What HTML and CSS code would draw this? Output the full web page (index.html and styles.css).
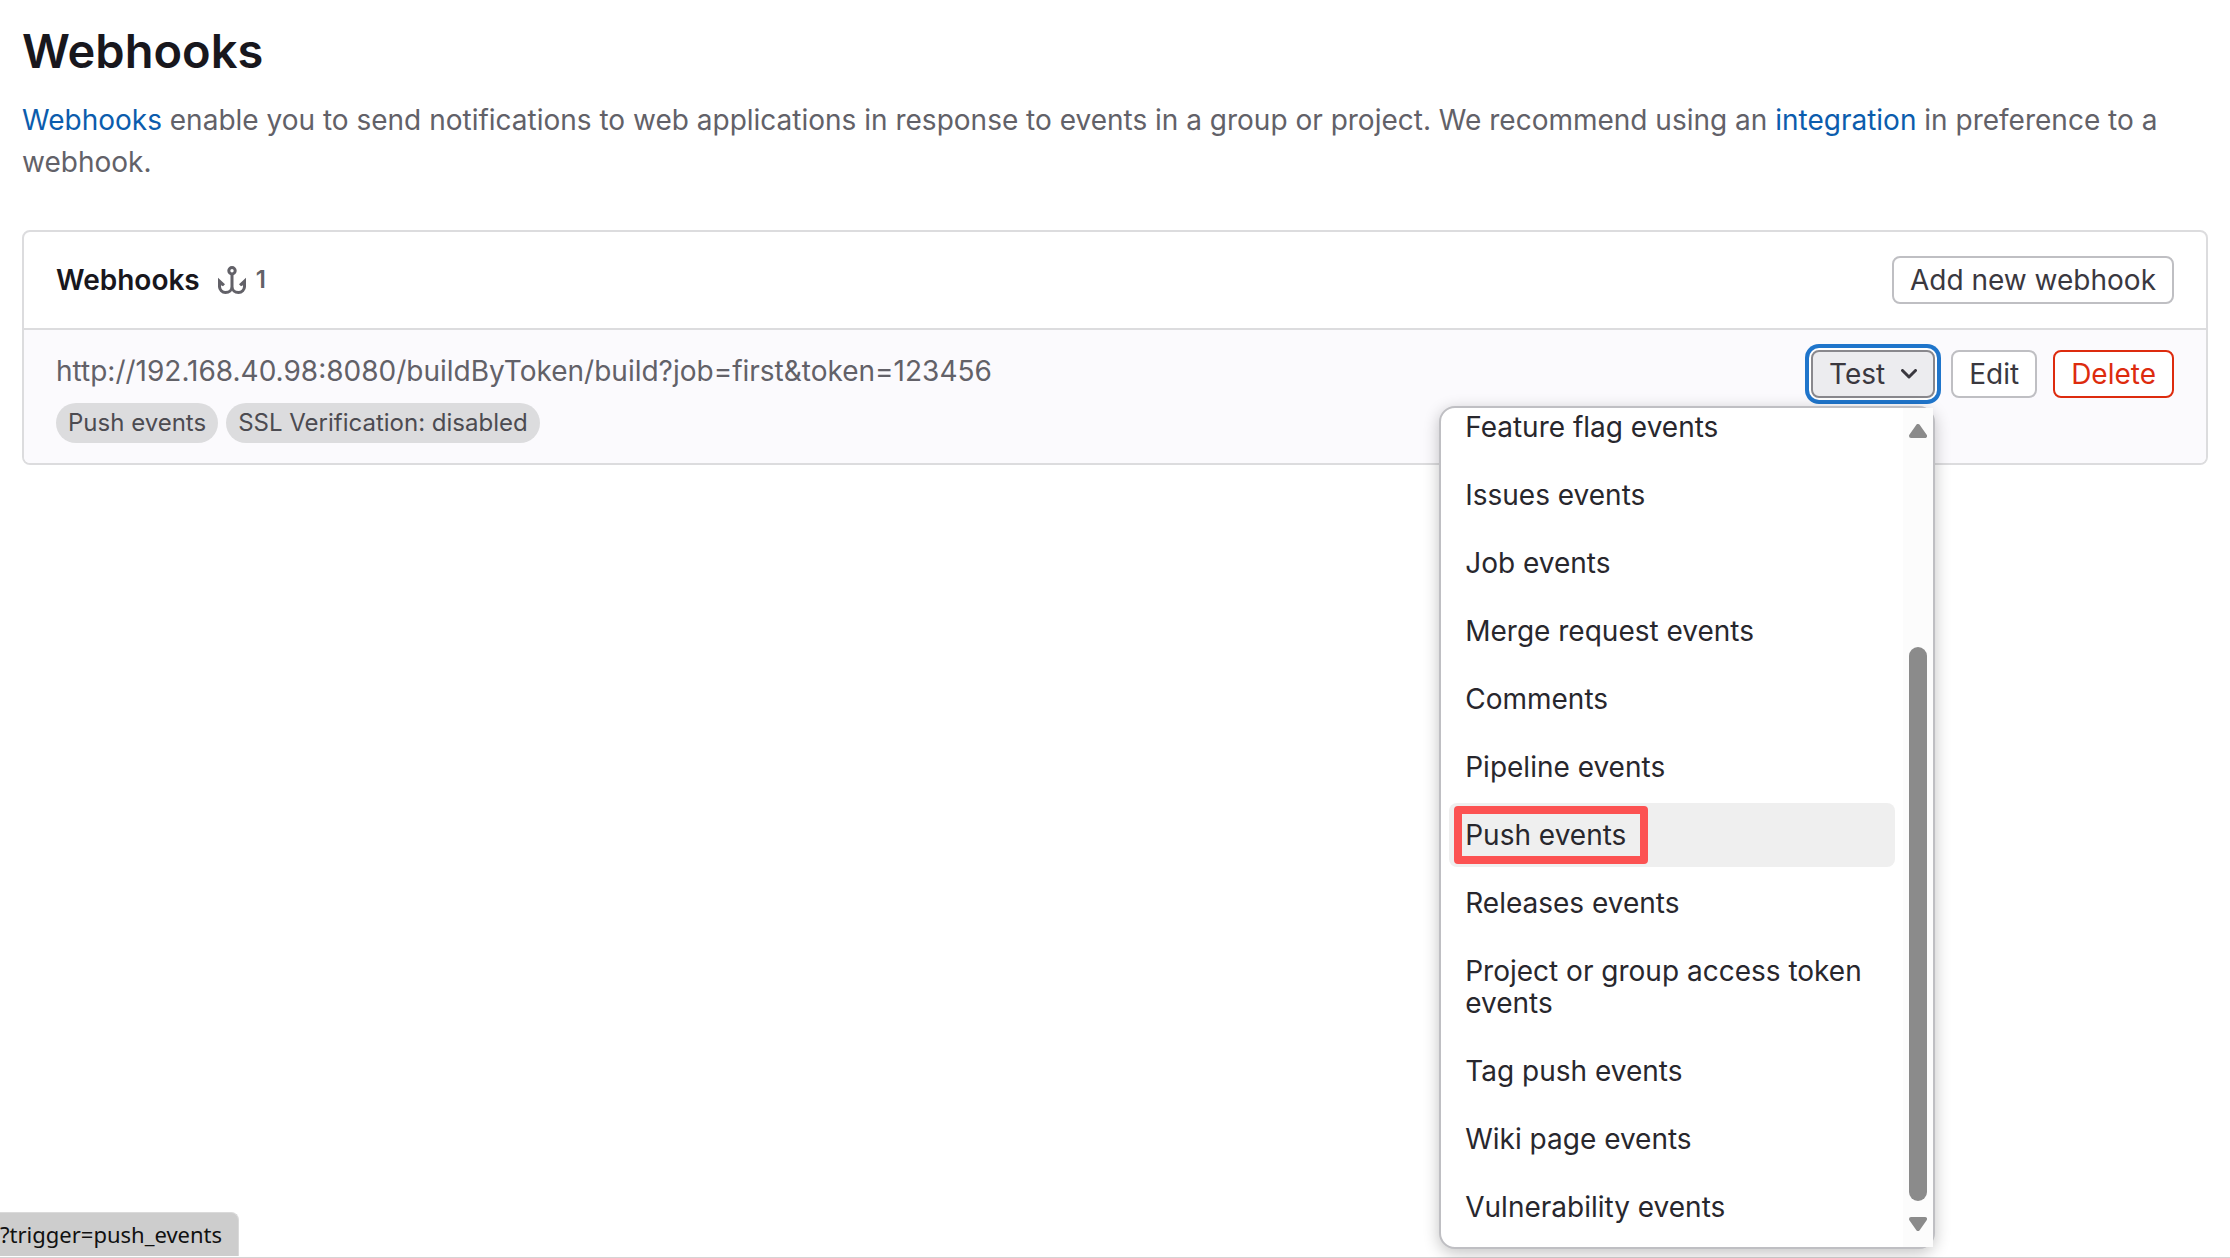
FILE: index.html
```html
<!DOCTYPE html>
<html lang="en">
<head>
<meta charset="utf-8">
<title>Webhooks</title>
<link rel="stylesheet" href="styles.css">
</head>
<body>
<main class="page">
  <h1 class="page-title">Webhooks</h1>
  <p class="intro"><a href="#">Webhooks</a> enable you to send notifications to web applications in response to events in a group or project. We recommend using an <a href="#">integration</a> in preference to a webhook.</p>

  <section class="card">
    <header class="card-header">
      <div class="card-heading">
        <h2 class="card-title">Webhooks</h2>
        <span class="count">
          <svg class="hook-icon" viewBox="0 0 28 28" aria-hidden="true">
            <g fill="none" stroke="currentColor" stroke-width="3">
              <circle cx="14" cy="4.700" r="3.200"/>
              <path d="M14 8V23M1.500 15v5.500a6 6 0 0 0 6 6c3.600 0 6.500-2.500 6.500-6M26.500 15v5.500a6 6 0 0 1-6 6c-3.600 0-6.500-2.500-6.500-6"/>
            </g>
            <path fill="currentColor" d="M0 11.700l7 6.500-2 2-2-1v2H0zM28 11.700l-7 6.500 2 2 2-1v2h3z"/>
          </svg>
          1
        </span>
      </div>
      <button type="button" class="btn">Add new webhook</button>
    </header>
    <div class="card-row">
      <div class="hook">
        <div class="hook-url">http://192.168.40.98:8080/buildByToken/build?job=first&amp;token=123456</div>
        <div class="badges">
          <span class="badge">Push events</span>
          <span class="badge">SSL Verification: disabled</span>
        </div>
      </div>
      <div class="actions">
        <div class="dropdown">
          <button type="button" class="btn btn-open" aria-expanded="true">Test
            <svg class="chevron" viewBox="0 0 16 10" aria-hidden="true"><path d="M1.500 1.500L8 8l6.500-6.500" fill="none" stroke="currentColor" stroke-width="3" stroke-linecap="round" stroke-linejoin="round"/></svg>
          </button>
          <div class="menu">
            <ul class="menu-list">
              <li><a class="menu-item" href="#">Feature flag events</a></li>
              <li><a class="menu-item" href="#">Issues events</a></li>
              <li><a class="menu-item" href="#">Job events</a></li>
              <li><a class="menu-item" href="#">Merge request events</a></li>
              <li><a class="menu-item" href="#">Comments</a></li>
              <li><a class="menu-item" href="#">Pipeline events</a></li>
              <li><a class="menu-item active" href="#">Push events<span class="marker"></span></a></li>
              <li><a class="menu-item" href="#">Releases events</a></li>
              <li><a class="menu-item" href="#">Project or group access token events</a></li>
              <li><a class="menu-item" href="#">Tag push events</a></li>
              <li><a class="menu-item" href="#">Wiki page events</a></li>
              <li><a class="menu-item" href="#">Vulnerability events</a></li>
            </ul>
            <div class="scrollbar" aria-hidden="true">
              <svg class="arrow" viewBox="0 0 18 14"><path d="M9 2l7 10H2z" fill="currentColor" stroke="currentColor" stroke-width="4" stroke-linejoin="round"/></svg>
              <div class="track"><div class="thumb"></div></div>
              <svg class="arrow" viewBox="0 0 18 14"><path d="M9 12l7-10H2z" fill="currentColor" stroke="currentColor" stroke-width="4" stroke-linejoin="round"/></svg>
            </div>
          </div>
        </div>
        <button type="button" class="btn">Edit</button>
        <button type="button" class="btn btn-danger">Delete</button>
      </div>
    </div>
  </section>
</main>
<footer class="status"><span class="status-text">?trigger=push_events</span></footer>
</body>
</html>
```
FILE: styles.css
```css
* { box-sizing: border-box; }

body {
  margin: 0;
  min-height: 100vh;
  display: flex;
  flex-direction: column;
  justify-content: space-between;
  background: #fff;
  color: #626168;
  font: 28px/42px Inter, "Liberation Sans", sans-serif;
}

a { color: #0b5cad; text-decoration: none; }

.page { padding: 20px 22px 0; }

.page-title {
  margin: 0 0 17px;
  color: #18171d;
  font-size: 47px;
  line-height: 62px;
  font-weight: 600;
}

.intro { margin: 0 0 47px; }

.card {
  border: 2px solid #dcdcde;
  border-radius: 8px;
}

.card-header {
  display: flex;
  justify-content: space-between;
  align-items: center;
  padding: 24px 32px;
  border-bottom: 2px solid #dcdcde;
}

.card-heading { display: flex; align-items: center; gap: 18px; }

.card-title {
  margin: 0;
  color: #18171d;
  font-size: 28px;
  line-height: 42px;
  font-weight: 600;
}

.count {
  display: flex;
  align-items: center;
  gap: 10px;
  font-size: 24px;
  font-weight: 600;
}

.hook-icon { width: 28px; height: 28px; }

.card-row {
  display: flex;
  justify-content: space-between;
  align-items: flex-start;
  padding: 20px 32px;
  border-radius: 0 0 6px 6px;
  background: #fbfafd;
}

.hook { display: flex; flex-direction: column; gap: 11px; }

.badges { display: flex; gap: 8px; }

.badge {
  padding: 0 12px;
  border-radius: 20px;
  background: #dcdcde;
  color: #4c4b51;
  font-size: 24px;
  line-height: 40px;
}

.actions { display: flex; gap: 16px; }

.btn {
  display: flex;
  align-items: center;
  height: 48px;
  padding: 0 16px;
  border: 2px solid #bfbfc3;
  border-radius: 8px;
  background: #fff;
  color: #3a383f;
  font: inherit;
}

.btn-open {
  gap: 16px;
  border-color: #89888d;
  background: #ececef;
  box-shadow: 0 0 0 2px #fff, 0 0 0 6px #1f75cb;
}

.chevron { width: 16px; height: 10px; }

.btn-danger { border-color: #dd2b0e; color: #dd2b0e; }

.dropdown { position: relative; }

.menu {
  position: absolute;
  top: 56px;
  right: 0;
  display: flex;
  width: 496px;
  height: 843px;
  border: 2px solid #bfbfc3;
  border-radius: 16px;
  background: #fff;
  box-shadow: 0 4px 16px rgba(5, 5, 6, 0.24);
}

/* The list is scrolled to its end. */
.menu-list {
  flex: 1;
  display: flex;
  flex-direction: column;
  justify-content: flex-end;
  gap: 4px;
  margin: 0;
  padding: 8px;
  overflow: hidden;
  list-style: none;
}

.menu-item {
  position: relative;
  display: block;
  padding: 16px;
  border-radius: 8px;
  color: #28272d;
  line-height: 32px;
}

.menu-item.active { background: #efefef; }

.marker {
  position: absolute;
  top: 3px;
  left: 5px;
  width: 194px;
  height: 58px;
  border: 8px solid #fc5252;
  border-radius: 4px;
}

.scrollbar {
  display: flex;
  flex-direction: column;
  align-items: center;
  width: 30px;
  padding: 16px 6px;
  background: #fcfcfc;
  color: #8b8b8b;
}

.arrow { width: 18px; height: 14px; }

.track {
  flex: 1;
  display: flex;
  flex-direction: column;
  justify-content: flex-end;
  padding-bottom: 16px;
}

.thumb {
  width: 18px;
  height: 554px;
  border-radius: 9px;
  background: #8b8b8b;
}

.status {
  display: flex;
  padding-bottom: 1px;
  border-bottom: 1px solid #d4d4d4;
}

.status-text {
  padding: 0 16px 0 0;
  border-top: 1px solid #dadada;
  border-right: 1px solid #dadada;
  border-radius: 0 8px 0 0;
  background: #cdcdcd;
  color: #111;
  font: 22px/43px "Noto Sans", sans-serif;
}
```
